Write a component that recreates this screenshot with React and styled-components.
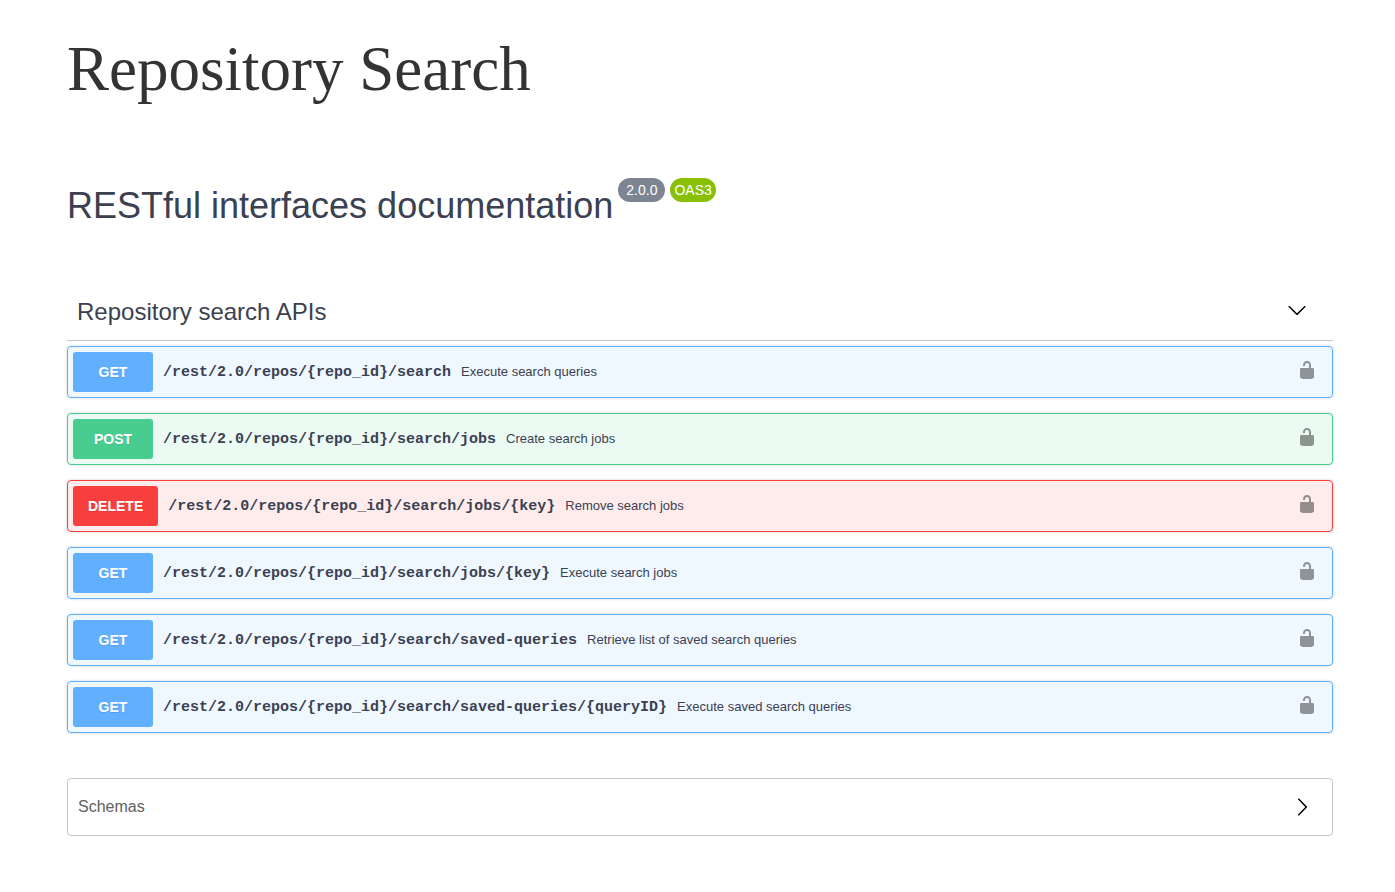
import React from 'react';
import styled, { createGlobalStyle } from 'styled-components';

const GlobalStyle = createGlobalStyle`
  * {
    box-sizing: border-box;
  }
  body {
    margin: 0;
    background: #fff;
    color: #3b4151;
    font-family: "Liberation Sans", Arial, sans-serif;
  }
`;

const methodColors = {
    GET: "97, 175, 254",
    POST: "73, 204, 144",
    DELETE: "249, 62, 62",
}

const Page = styled.main`
  padding: 32px 62px 56px 67px;
`;

const PageTitle = styled.h1`
  margin: 0;
  color: #333;
  font-family: "Liberation Serif", "Times New Roman", serif;
  font-size: 63px;
  font-weight: 400;
  line-height: 74px;
`;

const Info = styled.header`
  display: flex;
  align-items: flex-start;
  margin: 72px 0 50px;
`;

const InfoTitle = styled.h2`
  margin: 0;
  font-size: 36px;
  font-weight: 400;
  line-height: 56px;
`;

const Badge = styled.span`
  margin-left: 5px;
  padding: 0 ${(props) => props.$pad};
  border-radius: 12px;
  background: ${(props) => props.$color};
  color: #fff;
  font-size: 14px;
  line-height: 24px;
`;

const TagHeader = styled.button`
  display: flex;
  align-items: center;
  justify-content: space-between;
  width: 100%;
  margin-bottom: 5px;
  padding: 10px 26px 10px 10px;
  border: 0;
  border-bottom: 1px solid rgba(59, 65, 81, 0.3);
  background: none;
  color: inherit;
  font-family: inherit;
  font-size: 24px;
  line-height: 36px;
  cursor: pointer;
`;

const Operations = styled.div`
  display: flex;
  flex-direction: column;
  gap: 15px;
`;

const Operation = styled.div`
  display: flex;
  align-items: center;
  padding: 5px;
  border: 1px solid rgb(${(props) => props.$rgb});
  border-radius: 4px;
  background: rgba(${(props) => props.$rgb}, 0.1);
  box-shadow: 0 0 3px rgba(0, 0, 0, 0.19);
`;

const Summary = styled.button`
  display: flex;
  flex: 1;
  align-items: center;
  gap: 10px;
  padding: 0;
  border: 0;
  background: none;
  color: inherit;
  font-family: inherit;
  text-align: left;
  cursor: pointer;
`;

const Method = styled.span`
  min-width: 80px;
  padding: 0 15px;
  border-radius: 3px;
  background: rgb(${(props) => props.$rgb});
  color: #fff;
  font-size: 14px;
  font-weight: 700;
  line-height: 40px;
  text-align: center;
  text-shadow: 0 1px 0 rgba(0, 0, 0, 0.1);
`;

const Path = styled.span`
  font-family: "Liberation Mono", monospace;
  font-size: 15px;
  font-weight: 700;
`;

const Description = styled.span`
  padding-bottom: 2px;
  font-size: 13px;
`;

const LockButton = styled.button`
  display: flex;
  padding: 0 10px;
  border: 0;
  background: none;
  cursor: pointer;
`;

const Lock = styled.svg`
  margin-bottom: 4px;
  opacity: 0.4;
`;

const HeaderArrow = styled.svg`
  margin-bottom: 4px;
`;

const Schemas = styled.button`
  display: flex;
  align-items: center;
  justify-content: space-between;
  width: 100%;
  margin-top: 45px;
  padding: 10px 20px 10px 10px;
  border: 1px solid rgba(59, 65, 81, 0.3);
  border-radius: 4px;
  background: none;
  color: #606060;
  font-family: inherit;
  font-size: 16px;
  line-height: 36px;
  cursor: pointer;
`;

const ArrowDown = () => (
    <HeaderArrow width="20" height="20" viewBox="0 0 20 20" aria-hidden="true">
        <path d="M17.418 6.109c.272-.268.709-.268.979 0s.271.701 0 .969l-7.908 7.83c-.27.268-.707.268-.979 0l-7.908-7.83c-.27-.268-.27-.701 0-.969.271-.268.709-.268.979 0L10 13.25l7.418-7.141z" />
    </HeaderArrow>
);

const ArrowRight = () => (
    <svg width="20" height="20" viewBox="0 0 20 20" aria-hidden="true">
        <path d="M13.25 10L6.109 2.58c-.268-.27-.268-.707 0-.979.268-.27.701-.27.969 0l7.83 7.908c.268.271.268.709 0 .979l-7.83 7.908c-.271.271-.701.27-.969 0-.268-.269-.268-.707 0-.979L13.25 10z" />
    </svg>
);

const OpenLock = () => (
    <Lock width="20" height="20" viewBox="0 0 20 20" aria-hidden="true">
        <path d="M15.8 8H14V5.6C14 2.703 12.665 1 10 1 7.334 1 6 2.703 6 5.6V6h2v-.801C8 3.754 8.797 3 10 3c1.203 0 2 .754 2 2.199V8H4c-.553 0-1 .646-1 1.199V17c0 .549.428 1.139.951 1.307l1.197.387C5.672 18.861 6.55 19 7.1 19h5.8c.549 0 1.428-.139 1.951-.307l1.196-.387c.524-.167.953-.757.953-1.306V9.199C17 8.646 16.352 8 15.8 8z" />
    </Lock>
);

const operations = [
    { method: "GET", path: "/rest/2.0/repos/{repo_id}/search", description: "Execute search queries" },
    { method: "POST", path: "/rest/2.0/repos/{repo_id}/search/jobs", description: "Create search jobs" },
    { method: "DELETE", path: "/rest/2.0/repos/{repo_id}/search/jobs/{key}", description: "Remove search jobs" },
    { method: "GET", path: "/rest/2.0/repos/{repo_id}/search/jobs/{key}", description: "Execute search jobs" },
    { method: "GET", path: "/rest/2.0/repos/{repo_id}/search/saved-queries", description: "Retrieve list of saved search queries" },
    { method: "GET", path: "/rest/2.0/repos/{repo_id}/search/saved-queries/{queryID}", description: "Execute saved search queries" },
];

const App = () => {
    return (
        <Page>
            <GlobalStyle />
            <PageTitle>Repository Search</PageTitle>
            <Info>
                <InfoTitle>RESTful interfaces documentation</InfoTitle>
                <Badge $color="#7d8492" $pad="8px">2.0.0</Badge>
                <Badge $color="#89bf04" $pad="4px">OAS3</Badge>
            </Info>
            <TagHeader type="button">
                <span>Repository search APIs</span>
                <ArrowDown />
            </TagHeader>
            <Operations>
                {operations.map(({ method, path, description }) => (
                    <Operation key={method + path} $rgb={methodColors[method]}>
                        <Summary type="button">
                            <Method $rgb={methodColors[method]}>{method}</Method>
                            <Path>{path}</Path>
                            <Description>{description}</Description>
                        </Summary>
                        <LockButton type="button" aria-label={`Authorize ${method} ${path}`}>
                            <OpenLock />
                        </LockButton>
                    </Operation>
                ))}
            </Operations>
            <Schemas type="button">
                <span>Schemas</span>
                <ArrowRight />
            </Schemas>
        </Page>
    )
};

export default App;
